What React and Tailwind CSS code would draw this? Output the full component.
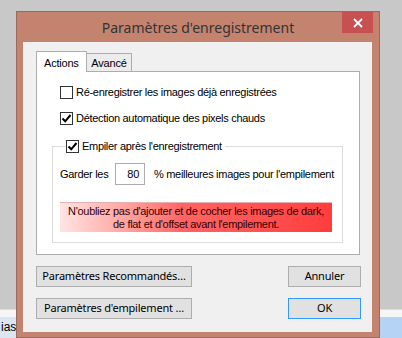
import { useState } from "react";

const sans = { fontFamily: '"Liberation Sans", Arial, sans-serif' };
const ui = { fontFamily: '"Noto Sans", "Open Sans", sans-serif' };

function Check({ checked }) {
    return (
        <span className="w-[13px] h-[13px] border border-[#333] bg-white flex items-center justify-center shrink-0">
            {checked && (
                <svg width="11" height="11" viewBox="0 0 11 11">
                    <path d="M1.5 5.5 L4.2 8.3 L9.5 2" stroke="#000" strokeWidth="2" fill="none" />
                </svg>
            )}
        </span>
    );
}

function CheckRow({ checked, label }) {
    return (
        <label className="flex items-center gap-[3px] text-[11px] tracking-[-0.3px] text-black leading-[13px] whitespace-nowrap">
            <Check checked={checked} />
            <span>{label}</span>
        </label>
    );
}

function Button({ children, width, focused }) {
    return (
        <button
            className={`h-[21px] ${width} text-[11px] tracking-[-0.2px] text-black bg-[#e1e1e1] border whitespace-nowrap ${focused ? "border-[#3399ff]" : "border-[#adadad]"} flex items-center justify-center`}
            style={ui}
        >
            {children}
        </button>
    );
}

export default function App() {
    const [tab] = useState("actions");
    return (
        <div className="relative w-[402px] h-[338px] overflow-hidden bg-[#c8c8c8] flex flex-col" style={sans}>
            <div className="h-[309px]" />
            <div className="h-px bg-[#dedede]" />
            <div className="h-[7px] bg-[#f6f6f6]" />
            <div className="flex-1 flex">
                <div className="w-[200px] bg-[#dce6f2] text-[12px] text-black pl-px leading-[21px]">ias</div>
                <div className="flex-1 bg-[#b4d3f5]" />
            </div>

            {/* window */}
            <div className="absolute left-[16px] top-[11px] w-[364px] h-[327px] bg-[#c3836f] border border-[#9a6a5c] flex flex-col">
                <div className="h-[30px] flex items-center justify-center relative">
                    <span className="text-[14px] text-[#333] whitespace-nowrap" style={ui}>
                        Paramètres d'enregistrement
                    </span>
                    <div className="absolute right-[6px] top-0 w-[31px] h-[21px] bg-[#c75050] flex items-center justify-center">
                        <svg width="10" height="10" viewBox="0 0 10 10">
                            <path d="M1 1 L9 9 M9 1 L1 9" stroke="#fff" strokeWidth="1.8" />
                        </svg>
                    </div>
                </div>

                <div className="ml-[6px] mr-[7px] h-[290px] bg-[#f0f0f0] pt-[9px] pl-[13px] pr-[12px] flex flex-col">
                    {/* tabs */}
                    <div className="flex items-end h-[21px]">
                        <div className={`h-[21px] w-[51px] px-[7px] flex items-start pt-[3px] text-[11px] tracking-[-0.2px] text-black border border-b-0 border-[#adadad] relative z-10 ${tab === "actions" ? "bg-white" : ""}`}>
                            Actions
                        </div>
                        <div className="h-[19px] w-[46px] -ml-px flex items-center justify-center text-[11px] tracking-[-0.2px] text-black border border-b-0 border-[#adadad] bg-[#ececec]">
                            Avancé
                        </div>
                    </div>

                    <div className="-mt-px h-[184px] bg-white border border-[#adadad] pl-[23px] pt-[14px] flex flex-col">
                        <CheckRow label="Ré-enregistrer les images déjà enregistrées" />
                        <div className="h-[13px]" />
                        <CheckRow checked label="Détection automatique des pixels chauds" />
                        <div className="h-[15px]" />

                        <fieldset className="-ml-[8px] w-[291px] h-[103px] border border-[#dcdcdc] pl-[7px]">
                            <legend className="ml-[6px] pr-[3px]">
                                <CheckRow checked label="Empiler après l'enregistrement" />
                            </legend>
                            <div className="flex items-center h-[22px] mt-[10px] text-[11px] tracking-[-0.3px] text-black whitespace-nowrap">
                                <span className="w-[55px]">Garder les</span>
                                <div className="w-[30px] h-[22px] border border-[#adadad] bg-white flex items-center justify-end pr-[5px]">
                                    80
                                </div>
                                <span className="ml-[9px]">% meilleures images pour l'empilement</span>
                            </div>
                            <div className="mt-[17px] w-[272px] h-[30px] bg-gradient-to-r from-[#fde4e4] via-[#ff6464] via-45% to-[#ff3c3c] flex flex-col items-center justify-center text-[11px] tracking-[-0.3px] leading-[13px] text-[#3a0000] whitespace-nowrap border-t border-[#e8b0b0]">
                                <span>N'oubliez pas d'ajouter et de cocher les images de dark,</span>
                                <span>de flat et d'offset avant l'empilement.</span>
                            </div>
                        </fieldset>
                    </div>

                    <div className="flex justify-between mt-[11px]">
                        <div className="flex flex-col gap-[11px]">
                            <Button width="w-[156px]">Paramètres Recommandés…</Button>
                            <Button width="w-[156px]">Paramètres d'empilement …</Button>
                        </div>
                        <div className="flex flex-col gap-[11px] -mr-px">
                            <Button width="w-[73px]">Annuler</Button>
                            <Button width="w-[73px]" focused>OK</Button>
                        </div>
                    </div>
                </div>
            </div>
        </div>
    );
}
